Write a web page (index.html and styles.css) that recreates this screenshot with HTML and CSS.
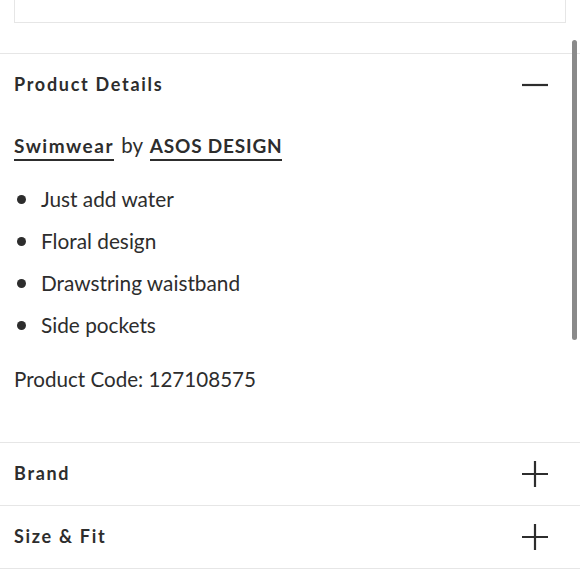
FILE: index.html
```html
<!DOCTYPE html>
<html>
<head>
<meta charset="utf-8">
<link rel="stylesheet" href="styles.css">
</head>
<body>
<div class="page">
  <div class="top-box"></div>
  <section class="acc open">
    <div class="acc-head">
      <h2 class="acc-title">Product Details</h2>
      <svg class="acc-icon" width="26" height="26" viewBox="0 0 26 26"><path d="M0 13H26" stroke="#2d2d2d" stroke-width="2.2"/></svg>
    </div>
    <div class="acc-body">
      <p class="cat"><a class="lnk lnk-cat">Swimwear</a> by <a class="lnk lnk-brand">ASOS DESIGN</a></p>
      <ul class="bullets">
        <li>Just add water</li>
        <li>Floral design</li>
        <li>Drawstring waistband</li>
        <li>Side pockets</li>
      </ul>
      <p class="code">Product Code: 127108575</p>
    </div>
  </section>
  <section class="acc">
    <div class="acc-head">
      <h2 class="acc-title">Brand</h2>
      <svg class="acc-icon" width="26" height="26" viewBox="0 0 26 26"><path d="M0 13H26M13 0V26" stroke="#2d2d2d" stroke-width="2.2"/></svg>
    </div>
  </section>
  <section class="acc">
    <div class="acc-head">
      <h2 class="acc-title">Size &amp; Fit</h2>
      <svg class="acc-icon" width="26" height="26" viewBox="0 0 26 26"><path d="M0 13H26M13 0V26" stroke="#2d2d2d" stroke-width="2.2"/></svg>
    </div>
  </section>
</div>
<div class="scrollbar"></div>
</body>
</html>
```
FILE: styles.css
```css
html, body {
  margin: 0;
  padding: 0;
  background: #fff;
}
body {
  font-family: "Lato", "Liberation Sans", sans-serif;
  color: #2d2d2d;
  width: 580px;
  height: 580px;
  overflow: hidden;
  position: relative;
}
.page {
  display: flex;
  flex-direction: column;
}
.top-box {
  height: 23px;
  margin: 0 14px;
  border: 1px solid #e6e6e6;
  border-top: none;
  box-sizing: border-box;
  margin-bottom: 30px;
}
.acc {
  border-top: 1px solid #e6e6e6;
}
.acc:last-child {
  border-bottom: 1px solid #e6e6e6;
}
.acc-head {
  height: 62px;
  display: flex;
  align-items: center;
  justify-content: space-between;
  padding: 0 32px 0 14px;
}
.acc-title {
  margin: 0 0 2px;
  font-size: 18px;
  font-weight: 700;
  letter-spacing: 1.7px;
}
.acc-icon {
  display: block;
}
.acc-body {
  padding: 0 14px 49px;
}
.cat {
  margin: 15px 0 0;
  font-size: 20.5px;
  line-height: 28px;
}
.lnk {
  font-size: 19px;
  font-weight: 700;
  border-bottom: 2px solid #2d2d2d;
  padding-bottom: 2px;
}
.lnk-cat {
  letter-spacing: 1.5px;
  margin-right: 2px;
}
.lnk-brand {
  letter-spacing: 0.8px;
  margin-left: 2px;
}
.bullets {
  list-style: none;
  margin: 25px 0 0;
  padding: 0;
  display: flex;
  flex-direction: column;
  gap: 14px;
}
.bullets li {
  font-size: 20.8px;
  line-height: 28px;
  display: flex;
  align-items: center;
  gap: 15px;
}
.bullets li::before {
  content: "";
  width: 9px;
  height: 9px;
  border-radius: 50%;
  background: #2d2d2d;
  margin-left: 3px;
}
.code {
  margin: 26px 0 0;
  font-size: 20.6px;
  line-height: 28px;
}
.scrollbar {
  position: absolute;
  right: 3px;
  top: 40px;
  width: 5px;
  height: 300px;
  border-radius: 3px;
  background: #8a8a8a;
}
```
